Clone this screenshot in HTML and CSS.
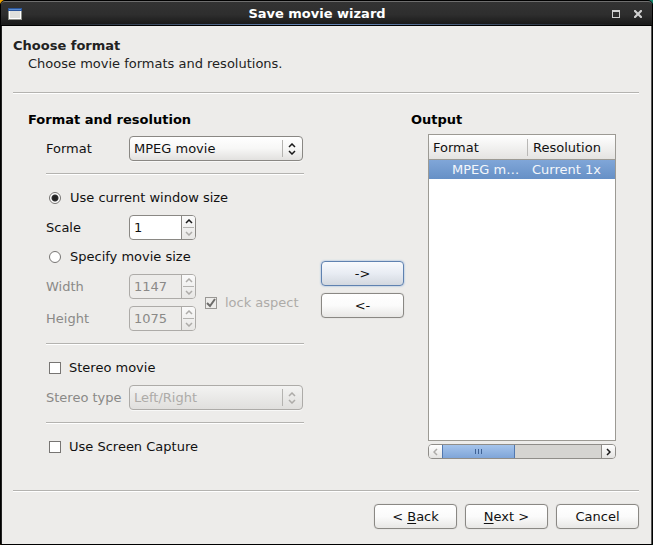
FILE: index.html
```html
<!DOCTYPE html>
<html lang="en">
<head>
<meta charset="utf-8">
<title>Save movie wizard</title>
<link rel="stylesheet" href="styles.css">
</head>
<body>
<div class="window">
  <header class="titlebar">
    <svg class="app-icon" width="14" height="12" viewBox="0 0 14 12" aria-hidden="true">
      <rect width="14" height="12" fill="#8d8f88"/>
      <rect x="1" y="1" width="12" height="10" fill="#fff"/>
      <rect x="2" y="3" width="10" height="7" fill="#dfe0dc"/>
      <rect width="14" height="3" fill="#2a5599"/>
      <rect x="1" y="1" width="12" height="1" fill="#5b8bd0"/>
    </svg>
    <span class="title">Save movie wizard</span>
    <button class="win-btn" type="button" aria-label="Maximize">
      <svg width="8" height="8" viewBox="0 0 8 8" shape-rendering="crispEdges"><path d="M0 0H8V8H0ZM1 2V7H7V2Z" fill="#d0d0d0" fill-rule="evenodd"/></svg>
    </button>
    <button class="win-btn" type="button" aria-label="Close">
      <svg width="8" height="8" viewBox="0 0 8 8"><path d="M1 1L7 7M7 1L1 7" stroke="#d0d0d0" stroke-width="2.2" stroke-linecap="square"/></svg>
    </button>
  </header>

  <form class="page">
    <div class="intro">
      <h1>Choose format</h1>
      <p>Choose movie formats and resolutions.</p>
    </div>
    <hr>

    <main class="main">
      <section class="settings">
        <h2>Format and resolution</h2>
        <div class="rows">
          <div class="row">
            <label class="name" for="format">Format</label>
            <div class="combo">
              <select id="format"><option>MPEG movie</option></select>
              <svg class="combo-arrows" width="8" height="12" viewBox="0 0 8 12" aria-hidden="true"><path d="M1 4L4 1L7 4M1 8L4 11L7 8"/></svg>
            </div>
          </div>
          <hr>
          <div class="row choice">
            <input type="radio" name="size" id="current" checked>
            <label for="current">Use current window size</label>
          </div>
          <div class="row">
            <label class="name" for="scale">Scale</label>
            <div class="spin">
              <input type="text" id="scale" value="1">
              <div class="steps">
                <button type="button" aria-label="Increase scale"><svg width="8" height="5" viewBox="0 0 8 5"><path d="M1 4L4 1L7 4"/></svg></button>
                <button type="button" aria-label="Decrease scale" disabled><svg width="8" height="5" viewBox="0 0 8 5"><path d="M1 1L4 4L7 1"/></svg></button>
              </div>
            </div>
          </div>
          <div class="row choice">
            <input type="radio" name="size" id="specify">
            <label for="specify">Specify movie size</label>
          </div>
          <div class="dimensions">
            <div class="rows">
              <div class="row disabled">
                <label class="name" for="width">Width</label>
                <div class="spin">
                  <input type="text" id="width" value="1147" disabled>
                  <div class="steps">
                    <button type="button" aria-label="Increase width" disabled><svg width="8" height="5" viewBox="0 0 8 5"><path d="M1 4L4 1L7 4"/></svg></button>
                    <button type="button" aria-label="Decrease width" disabled><svg width="8" height="5" viewBox="0 0 8 5"><path d="M1 1L4 4L7 1"/></svg></button>
                  </div>
                </div>
              </div>
              <div class="row disabled">
                <label class="name" for="height">Height</label>
                <div class="spin">
                  <input type="text" id="height" value="1075" disabled>
                  <div class="steps">
                    <button type="button" aria-label="Increase height" disabled><svg width="8" height="5" viewBox="0 0 8 5"><path d="M1 4L4 1L7 4"/></svg></button>
                    <button type="button" aria-label="Decrease height" disabled><svg width="8" height="5" viewBox="0 0 8 5"><path d="M1 1L4 4L7 1"/></svg></button>
                  </div>
                </div>
              </div>
            </div>
            <div class="lock">
              <span class="check">
                <input type="checkbox" id="lock" checked disabled>
                <svg width="12" height="12" viewBox="0 0 12 12" aria-hidden="true"><path d="M2 6L5 9L10 2" fill="none" stroke="#6c6b69" stroke-width="2"/></svg>
              </span>
              <label for="lock">lock aspect</label>
            </div>
          </div>
          <hr>
          <div class="row choice">
            <input type="checkbox" id="stereo">
            <label for="stereo">Stereo movie</label>
          </div>
          <div class="row disabled">
            <label class="name" for="stereo-type">Stereo type</label>
            <div class="combo">
              <select id="stereo-type" disabled><option>Left/Right</option></select>
              <svg class="combo-arrows" width="8" height="12" viewBox="0 0 8 12" aria-hidden="true"><path d="M1 4L4 1L7 4M1 8L4 11L7 8"/></svg>
            </div>
          </div>
          <hr>
          <div class="row choice">
            <input type="checkbox" id="capture">
            <label for="capture">Use Screen Capture</label>
          </div>
        </div>
      </section>

      <div class="transfer">
        <button class="btn primary" type="button">-&gt;</button>
        <button class="btn" type="button">&lt;-</button>
      </div>

      <section class="output">
        <h2>Output</h2>
        <div class="list">
          <table>
            <thead><tr><th>Format</th><th>Resolution</th></tr></thead>
            <tbody><tr><td>MPEG m…</td><td>Current 1x</td></tr></tbody>
          </table>
        </div>
        <div class="scrollbar">
          <button type="button" aria-label="Scroll left" disabled><svg width="5" height="8" viewBox="0 0 5 8"><path d="M4 1L1 4L4 7"/></svg></button>
          <div class="track"><div class="thumb"><i></i><i></i><i></i></div></div>
          <button type="button" aria-label="Scroll right"><svg width="5" height="8" viewBox="0 0 5 8"><path d="M1 1L4 4L1 7"/></svg></button>
        </div>
      </section>
    </main>

    <hr>
    <footer class="actions">
      <button class="btn" type="button"><span>&lt; <u>B</u>ack</span></button>
      <button class="btn" type="button"><span><u>N</u>ext &gt;</span></button>
      <button class="btn" type="button">Cancel</button>
    </footer>
  </form>
</div>
</body>
</html>
```

FILE: styles.css
```css
* {
  box-sizing: border-box;
}

body {
  margin: 0;
  background: linear-gradient(to right, #f2a500 50%, #14866f 50%);
  color: #111;
  font: 13px/18px "DejaVu Sans", Verdana, sans-serif;
}

button,
input,
select {
  margin: 0;
  padding: 0;
  color: inherit;
  font: inherit;
}

h1,
h2,
p {
  margin: 0;
  font-size: 13px;
}

svg {
  display: block;
}

hr {
  width: 100%;
  height: 2px;
  margin: 0;
  border: 0;
  border-top: 1px solid #b4b3b0;
  background: #fff;
}

.window {
  display: flex;
  flex-direction: column;
  min-height: 100vh;
  border: 1px solid #000;
  border-radius: 5px 5px 0 0;
  background: #000;
}

/* Title bar */
.titlebar {
  display: flex;
  align-items: center;
  height: 25px;
  padding: 0 10px 0 7px;
  border-top: 1px solid #6e6e6e;
  border-bottom: 1px solid #000;
  border-radius: 4px 4px 0 0;
  background:
    linear-gradient(to right, #1c1c1c 5%, #6484b4 45%, #6484b4 55%, #1c1c1c 95%) bottom / 100% 1px no-repeat,
    linear-gradient(#333, #2e2e2e 55%, #181818);
}

.title {
  flex: 1;
  color: #fff;
  font-weight: bold;
  text-align: center;
}

.win-btn {
  display: grid;
  place-items: center;
  width: 8px;
  height: 16px;
  border: 0;
  background: none;
}

.win-btn + .win-btn {
  margin-left: 14px;
}

/* Page */
.page {
  display: flex;
  flex: 1;
  flex-direction: column;
  padding: 11px 12px 15px 11px;
  border: solid #555;
  border-width: 0 1px;
  border-left-color: #222;
  background: #edecea;
}

.intro {
  padding-bottom: 19px;
  color: #222;
}

.intro p {
  padding-left: 15px;
}

.main {
  display: grid;
  flex: 1;
  grid-template-columns: 276px 100px minmax(0, 1fr);
  padding: 18px 23px 31px 15px;
}

h2 {
  margin-bottom: 6px;
  color: #000;
  line-height: 16px;
}

.rows {
  display: flex;
  flex-direction: column;
  gap: 7px;
}

.settings > .rows {
  padding: 2px 0 0 18px;
}

.rows hr {
  margin: 5px 0 6px;
}

.row {
  display: flex;
  align-items: center;
}

.name {
  width: 83px;
}

.disabled {
  color: #8a8987;
}

.choice {
  gap: 8px;
  height: 20px;
  padding-left: 3px;
}

/* Combo boxes */
.combo {
  position: relative;
  flex: 1;
  margin-right: 1px;
}

.combo select {
  display: block;
  width: 100%;
  height: 25px;
  padding: 0 24px 0 4px;
  border: 1px solid #8a8884;
  border-radius: 4px;
  appearance: none;
  background: linear-gradient(#fff, #f7f7f6 50%, #e2e1df);
  box-shadow: 0 1px 0 #f8f8f7;
}

.combo select:disabled {
  border-color: #adaba8;
  background: linear-gradient(#f3f3f2, #e0dfdd);
  color: #adaba8;
  opacity: 1;
}

.combo::after {
  content: "";
  position: absolute;
  top: 4px;
  right: 20px;
  width: 1px;
  height: 17px;
  background: #b4b3b0;
}

.combo-arrows {
  position: absolute;
  top: 7px;
  right: 7px;
  pointer-events: none;
}

.combo-arrows path,
.steps path,
.scrollbar path {
  fill: none;
  stroke: #1a1a1a;
  stroke-width: 1.5;
}

.disabled path,
button:disabled path {
  stroke: #adaba8;
}

/* Number boxes */
.spin {
  display: flex;
  width: 67px;
  height: 25px;
  overflow: hidden;
  border: 1px solid #8a8884;
  border-radius: 4px;
  background: #fff;
}

.spin > input {
  flex: 1;
  min-width: 0;
  padding-left: 4px;
  border: 0;
  background: none;
}

.steps {
  display: flex;
  flex-direction: column;
  width: 14px;
  border-left: 1px solid #8a8884;
  background: linear-gradient(#fafafa, #e8e7e5);
}

.steps button {
  display: grid;
  flex: 1;
  place-items: center;
  border: 0;
  background: none;
}

.steps button + button {
  margin: 0 1px;
  border-top: 1px solid #b4b3b0;
}

.disabled .spin,
.disabled .steps {
  border-color: #adaba8;
}

.disabled .spin {
  background: #edecea;
}

/* Radio buttons and tick boxes */
input[type="radio"],
input[type="checkbox"] {
  flex: none;
  width: 12px;
  height: 12px;
  border: 1px solid #777573;
  appearance: none;
  background: #fff;
}

input[type="radio"] {
  margin-right: 1px;
  border-radius: 50%;
}

input[type="radio"]:checked {
  background: radial-gradient(circle, #222 2px, #333 3px, #fff 4px);
}

.dimensions {
  display: flex;
  gap: 9px;
}

.lock {
  display: flex;
  align-items: center;
  gap: 8px;
  color: #adaba8;
}

.check {
  position: relative;
}

.check input {
  display: block;
  border-color: #999794;
  background: #edecea;
}

.check svg {
  position: absolute;
  top: 0;
  left: 0;
  pointer-events: none;
}

/* Push buttons */
.btn {
  width: 83px;
  height: 25px;
  border: 1px solid #8a8884;
  border-radius: 4px;
  background: linear-gradient(#fff, #fbfbfb 50%, #e8e7e5);
  box-shadow: 0 0 1px #b4b3b0;
}

.btn.primary {
  border-color: #5f82b0;
  background: linear-gradient(#f8fafd, #e8ecf3 50%, #d3d8df);
  box-shadow: 0 0 2px #7fa5d8;
}

.transfer {
  display: flex;
  flex-direction: column;
  gap: 7px;
  align-self: center;
  padding: 8px 0 0 17px;
}

/* Output list */
.output {
  display: flex;
  flex-direction: column;
  min-width: 0;
  padding-left: 7px;
}

.list {
  flex: 1;
  margin-left: 17px;
  border: 1px solid #9c9a94;
  background: #fff;
}

table {
  width: 100%;
  border-collapse: separate;
  border-spacing: 0;
  table-layout: fixed;
}

th {
  height: 25px;
  padding: 1px 5px 0;
  border-bottom: 1px solid #9c9a94;
  background: linear-gradient(#fff, #e4e3e1);
  font-weight: normal;
  text-align: left;
}

th:first-child {
  width: 99px;
  padding-left: 4px;
  background:
    linear-gradient(#b9b8b6, #b9b8b6) right / 1px 17px no-repeat,
    linear-gradient(#fff, #e4e3e1);
}

td {
  height: 19px;
  padding: 0 4px;
  overflow: hidden;
  color: #f4f7fb;
  text-overflow: ellipsis;
  white-space: nowrap;
}

td:first-child {
  padding-left: 23px;
}

tbody tr {
  background: linear-gradient(#80a6d8, #6690c6);
}

/* Scroll bar */
.scrollbar {
  display: flex;
  height: 15px;
  margin: 3px 0 0 17px;
  overflow: hidden;
  border: 1px solid #8f8d89;
  border-radius: 4px;
}

.scrollbar button {
  display: grid;
  place-items: center;
  width: 13px;
  border: 0;
  background: linear-gradient(#fff, #e4e3e1);
}

.scrollbar button:last-child {
  width: 14px;
  border-left: 1px solid #8f8d89;
}

.track {
  flex: 1;
  background: #d5d4d1;
}

.thumb {
  display: flex;
  align-items: center;
  justify-content: center;
  gap: 2px;
  width: 46%;
  height: 100%;
  border: solid #5178b0;
  border-width: 0 1px;
  background: linear-gradient(#a5c4ec, #7fa5d8);
}

.thumb i {
  width: 1px;
  height: 5px;
  background: #3f6295;
}

.actions {
  display: flex;
  gap: 8px;
  justify-content: flex-end;
  padding-top: 12px;
}

u {
  text-underline-offset: 2px;
}
```
